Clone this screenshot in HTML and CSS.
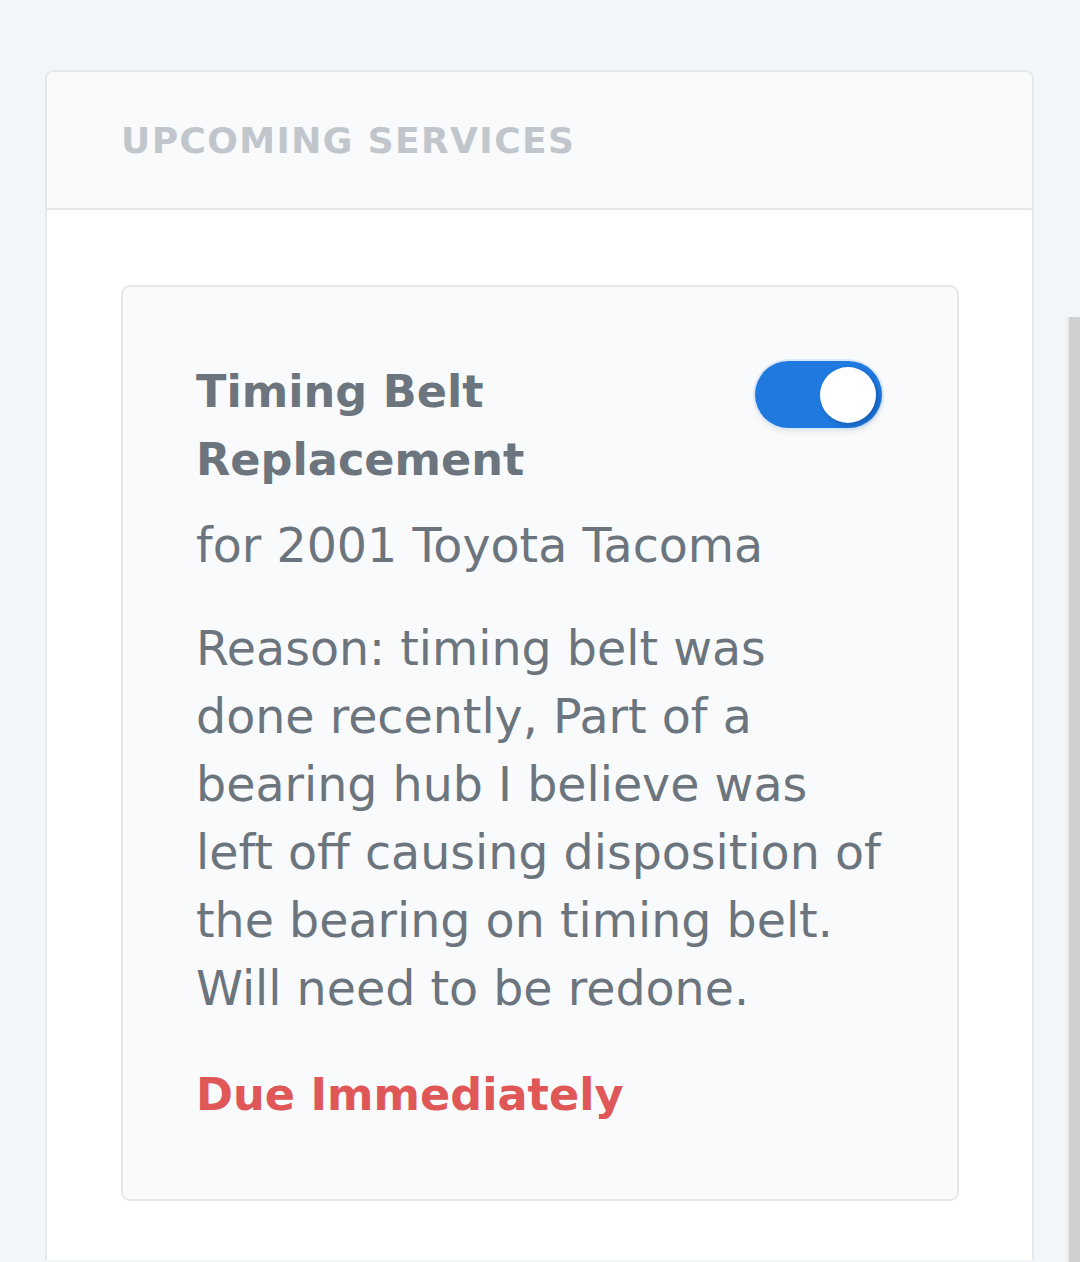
FILE: index.html
```html
<!DOCTYPE html>
<html>

<head>
  <title>Upcoming services</title>
  <link rel="stylesheet" href="styles.css">
</head>

<body>
  <section class="panel">
    <header class="panel-header">
      <h2>Upcoming Services</h2>
    </header>
    <div class="panel-body">
      <article class="service">
        <div class="service-top">
          <h3 class="service-title">Timing Belt Replacement</h3>
          <label class="switch">
            <input type="checkbox" checked>
            <span class="switch-track"><span class="switch-knob"></span></span>
          </label>
        </div>
        <p class="service-vehicle">for 2001 Toyota Tacoma</p>
        <p class="service-reason">Reason: timing belt was done recently, Part of a bearing hub I believe was left off causing disposition of the bearing on timing belt. Will need to be redone.</p>
        <p class="service-due">Due Immediately</p>
      </article>
    </div>
  </section>
  <div class="scrollbar"></div>
</body>

</html>
```

FILE: styles.css
```css
html {
  background-color: #f3f6f9;
  color: #6c757d;
  font-family: "DejaVu Sans", sans-serif;
}

body {
  margin: 0;
  padding-top: 70px;
}

h2,
h3,
p {
  margin: 0;
}

.panel {
  margin-left: 45px;
  width: 985px;
  border: 2px solid #e5e8eb;
  border-bottom: none;
  border-radius: 9px 9px 0 0;
  background-color: #fff;
  overflow: hidden;
}

.panel-header {
  height: 136px;
  display: flex;
  align-items: center;
  padding: 0 74px;
  background-color: #f8fafc;
  border-bottom: 2px solid #e5e8eb;
}

.panel-header h2 {
  font-size: 36px;
  font-weight: 600;
  letter-spacing: 1.4px;
  text-transform: uppercase;
  color: #c1c6cc;
}

.panel-body {
  padding: 75px 73px 59px 74px;
}

.service {
  background-color: #f8fafc;
  border: 2px solid #e5e8eb;
  border-radius: 9px;
  padding: 71px 73px 70px 73px;
}

.service-top {
  display: flex;
  justify-content: space-between;
  align-items: flex-start;
  gap: 40px;
}

.service-title,
.service-due {
  font-size: 44.6px;
  font-weight: bold;
  line-height: 68px;
}

.service-vehicle,
.service-reason {
  font-size: 47.5px;
  line-height: 68px;
}

.service-vehicle {
  margin-top: 18px;
}

.service-reason {
  margin-top: 35px;
}

.service-due {
  margin-top: 38px;
  color: #e05757;
}

.switch {
  flex-shrink: 0;
  margin: 3px 2px 0 0;
}

.switch input {
  display: none;
}

.switch-track {
  display: flex;
  justify-content: flex-end;
  align-items: center;
  box-sizing: border-box;
  width: 127px;
  height: 67px;
  padding: 0 6px;
  border-radius: 34px;
  background-color: #1f79df;
  box-shadow: 0 0 0 2px #dbe8f7, 0 4px 6px rgba(0, 0, 0, 0.08);
}

.switch-knob {
  width: 56px;
  height: 56px;
  border-radius: 50%;
  background-color: #fff;
  box-shadow: 3px 3px 5px rgba(10, 50, 110, 0.35);
}

.scrollbar {
  position: fixed;
  top: 317px;
  right: 0;
  bottom: 0;
  width: 11px;
  background-color: #d0d0d0;
  border-left: 2px solid #e9e9e9;
}
```
